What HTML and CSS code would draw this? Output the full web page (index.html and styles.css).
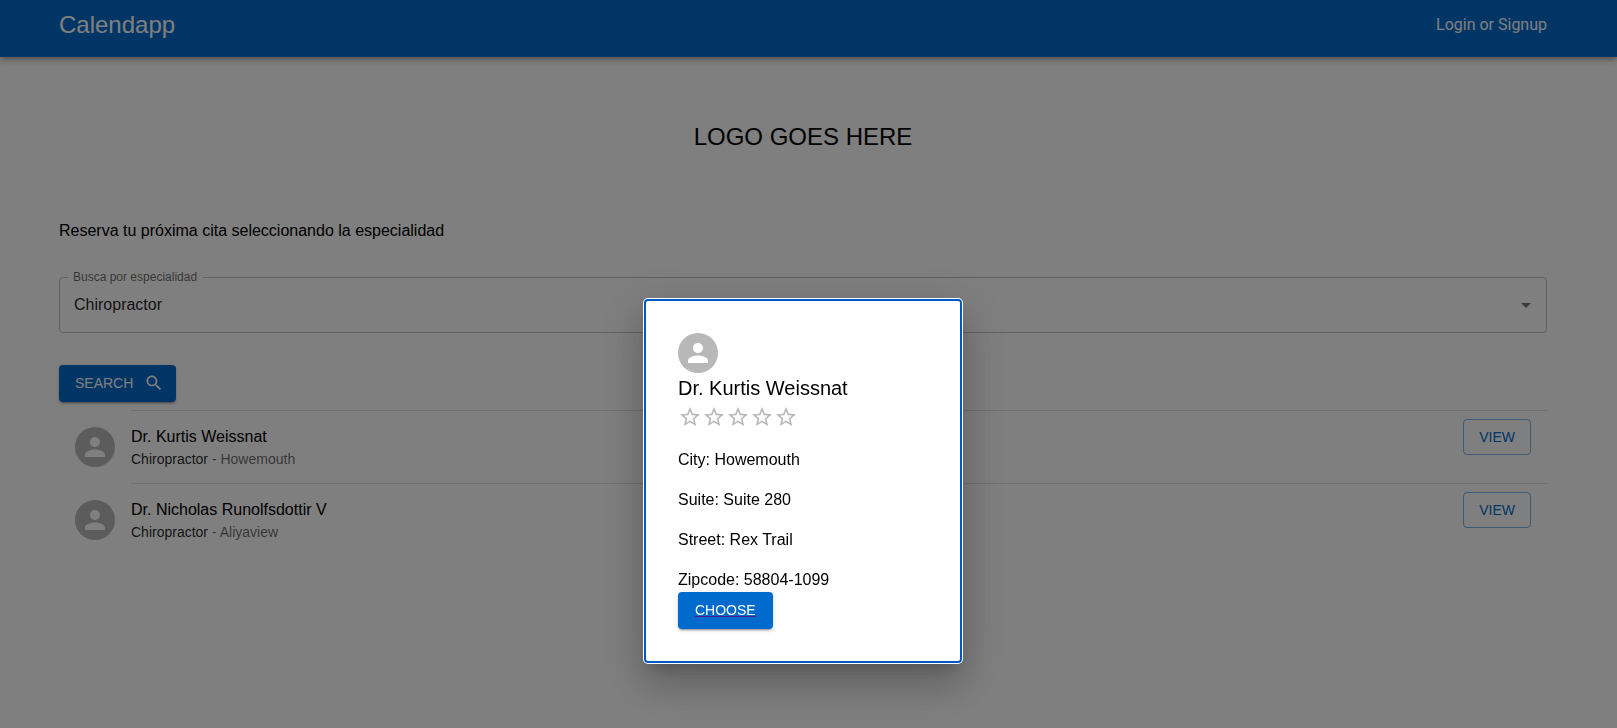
FILE: index.html
```html
<!DOCTYPE html>
<html lang="es">
<head>
<meta charset="utf-8">
<meta name="viewport" content="width=device-width, initial-scale=1">
<title>Calendapp</title>
<link rel="stylesheet" href="styles.css">
</head>
<body>
<svg class="sprite" aria-hidden="true">
  <symbol id="person" viewBox="0 0 24 24"><path d="M12 12c2.21 0 4-1.79 4-4s-1.79-4-4-4-4 1.79-4 4 1.79 4 4 4zm0 2c-2.67 0-8 1.34-8 4v2h16v-2c0-2.66-5.33-4-8-4z"/></symbol>
  <symbol id="star" viewBox="0 0 24 24"><path d="M22 9.24l-7.19-.62L12 2 9.19 8.63 2 9.24l5.46 4.73L5.82 21 12 17.27 18.18 21l-1.63-7.03L22 9.24zM12 15.4l-3.76 2.27 1-4.28-3.32-2.88 4.38-.38L12 6.1l1.71 4.04 4.38.38-3.32 2.88 1 4.28L12 15.4z"/></symbol>
</svg>

<header class="appbar">
  <div class="container appbar-inner">
    <a class="brand" href="#">Calendapp</a>
    <a class="login" href="#">Login or Signup</a>
  </div>
</header>

<main class="container">
  <h1 class="logo">LOGO GOES HERE</h1>
  <p class="intro">Reserva tu próxima cita seleccionando la especialidad</p>

  <form class="search-form">
    <fieldset class="field">
      <legend class="field-legend"><label for="specialty">Busca por especialidad</label></legend>
      <div class="field-body">
        <select class="field-select" id="specialty">
          <option>Chiropractor</option>
        </select>
        <svg class="caret" viewBox="0 0 24 24" aria-hidden="true"><path d="M7 10l5 5 5-5z"/></svg>
      </div>
    </fieldset>
    <button class="button button-filled button-search" type="button">SEARCH
      <svg class="search-icon" viewBox="0 0 24 24" aria-hidden="true"><path d="M15.5 14h-.79l-.28-.27C15.41 12.59 16 11.11 16 9.5 16 5.91 13.09 3 9.5 3S3 5.91 3 9.5 5.91 16 9.5 16c1.61 0 3.09-.59 4.23-1.57l.27.28v.79l5 4.99L20.49 19l-4.99-5zm-6 0C7.01 14 5 11.99 5 9.5S7.01 5 9.5 5 14 7.01 14 9.5 11.99 14 9.5 14z"/></svg>
    </button>
  </form>

  <ul class="doctors">
    <li class="doctor">
      <span class="avatar"><svg class="avatar-icon" aria-hidden="true"><use href="#person"/></svg></span>
      <div class="doctor-text">
        <p class="doctor-name">Dr. Kurtis Weissnat</p>
        <p class="doctor-detail"><span class="specialty">Chiropractor</span> - Howemouth</p>
      </div>
      <button class="button button-outlined" type="button">VIEW</button>
    </li>
    <li class="doctor">
      <span class="avatar"><svg class="avatar-icon" aria-hidden="true"><use href="#person"/></svg></span>
      <div class="doctor-text">
        <p class="doctor-name">Dr. Nicholas Runolfsdottir V</p>
        <p class="doctor-detail"><span class="specialty">Chiropractor</span> - Aliyaview</p>
      </div>
      <button class="button button-outlined" type="button">VIEW</button>
    </li>
  </ul>
</main>

<div class="backdrop">
  <section class="dialog" role="dialog" aria-modal="true" aria-labelledby="dialog-title">
    <span class="avatar"><svg class="avatar-icon" aria-hidden="true"><use href="#person"/></svg></span>
    <h2 class="dialog-title" id="dialog-title">Dr. Kurtis Weissnat</h2>
    <div class="rating" role="img" aria-label="0 Stars">
      <svg class="star"><use href="#star"/></svg>
      <svg class="star"><use href="#star"/></svg>
      <svg class="star"><use href="#star"/></svg>
      <svg class="star"><use href="#star"/></svg>
      <svg class="star"><use href="#star"/></svg>
    </div>
    <div class="address">
      <p>City: Howemouth</p>
      <p>Suite: Suite 280</p>
      <p>Street: Rex Trail</p>
      <p>Zipcode: 58804-1099</p>
    </div>
    <a class="button button-filled button-choose" href="#">CHOOSE</a>
  </section>
</div>
</body>
</html>
```
FILE: styles.css
```css
:root {
  --primary: #006bcc;
  --gutter: 11px;
}

* {
  box-sizing: border-box;
}

body {
  margin: 0;
  background: #fff;
  color: #000;
  font: 16px/24px "Liberation Sans", Arial, sans-serif;
}

h1, h2, p, ul {
  margin: 0;
  padding: 0;
  font-weight: 400;
}

svg {
  fill: currentColor;
  flex: none;
}

.sprite {
  display: none;
}

.appbar,
.backdrop {
  padding-right: var(--gutter);
}

.container {
  max-width: 1536px;
  margin: 0 auto;
  padding: 0 24px;
}

main.container {
  max-width: 1547px;
  padding-right: 35px;
}

@media (min-width: 1547px) {
  body > main.container {
    max-width: none;
    margin: 0;
    padding: 0 calc((100% - 1499px) / 2 + 11px) 0 calc((100% - 1499px) / 2);
  }
}

.appbar {
  background: var(--primary);
  box-shadow: 0 2px 4px -1px rgba(0, 0, 0, .2), 0 4px 5px rgba(0, 0, 0, .14), 0 1px 10px rgba(0, 0, 0, .12);
}

.appbar-inner {
  display: flex;
  align-items: center;
  justify-content: space-between;
  padding-top: 9px;
  padding-bottom: 16px;
}

.brand,
.login {
  color: #fff;
  text-decoration: none;
}

.brand {
  font-size: 24px;
  line-height: 32px;
}

.login {
  font-family: Roboto, sans-serif;
}

.logo {
  padding: 64px 0;
  font-size: 24px;
  line-height: 32px;
  text-align: center;
}

.intro {
  padding-top: 2px;
}

.search-form {
  padding-top: 28px;
}

.field {
  margin: 0;
  padding: 0 8px;
  border: 1px solid rgba(0, 0, 0, .23);
  border-radius: 4px;
}

.field-legend {
  padding: 0 6px 0 5px;
  color: rgba(0, 0, 0, .6);
  font-size: 12px;
  line-height: 12px;
}

.field-body {
  display: flex;
  align-items: center;
  position: relative;
  padding-bottom: 6px;
}

.field-select {
  flex: 1;
  height: 43px;
  padding: 0 32px 0 6px;
  border: 0;
  outline: 0;
  appearance: none;
  background: none;
  color: rgba(0, 0, 0, .87);
  font: inherit;
}

.caret {
  position: absolute;
  right: 0;
  width: 24px;
  height: 24px;
  color: rgba(0, 0, 0, .54);
  pointer-events: none;
}

.button {
  display: inline-flex;
  align-items: center;
  justify-content: center;
  border: 0;
  border-radius: 4px;
  font: 14px/24px "Liberation Sans", Arial, sans-serif;
  cursor: pointer;
}

.button-filled {
  height: 37px;
  padding-bottom: 1px;
  background: var(--primary);
  color: #fff;
  box-shadow: 0 3px 1px -2px rgba(0, 0, 0, .2), 0 2px 2px rgba(0, 0, 0, .14), 0 1px 5px rgba(0, 0, 0, .12);
}

.button-search {
  gap: 11px;
  margin-top: 32px;
  padding: 0 12px 1px 16px;
}

.search-icon {
  width: 20px;
  height: 20px;
}

.button-outlined {
  height: 36px;
  padding: 0 15px;
  border: 1px solid rgba(0, 107, 204, .5);
  background: none;
  color: var(--primary);
}

.button-choose {
  padding: 0 17px 2px;
  text-decoration: underline #551a8b;
}

.doctors {
  padding-top: 8px;
  list-style: none;
}

.doctor {
  display: grid;
  grid-template-columns: 72px 1fr;
  position: relative;
}

.doctor .avatar {
  margin: 17px 0 0 16px;
}

.doctor-text {
  min-height: 73px;
  padding: 14px 112px 14px 0;
  border-top: 1px solid rgba(0, 0, 0, .12);
}

.doctor .button {
  position: absolute;
  top: 9px;
  right: 16px;
}

.doctor-detail {
  color: rgba(0, 0, 0, .6);
  font-size: 14px;
  line-height: 20px;
}

.specialty {
  color: rgba(0, 0, 0, .87);
}

.avatar {
  display: flex;
  align-items: center;
  justify-content: center;
  width: 40px;
  height: 40px;
  border-radius: 50%;
  background: #b8b8b8;
  color: #fff;
}

.avatar-icon {
  width: 30px;
  height: 30px;
}

.backdrop {
  display: flex;
  align-items: flex-start;
  justify-content: center;
  position: fixed;
  inset: 0;
  padding-top: 299px;
  background: rgba(0, 0, 0, .5);
}

.dialog {
  width: 318px;
  padding: 32px;
  border: 2px solid #0058c4;
  border-radius: 4px;
  background: #fff;
  box-shadow: 0 0 0 1px #fff, 0 11px 15px -7px rgba(0, 0, 0, .2), 0 24px 38px 3px rgba(0, 0, 0, .14), 0 9px 46px 8px rgba(0, 0, 0, .12);
}

.dialog-title {
  padding-bottom: 2px;
  font-size: 20px;
  line-height: 30px;
}

.rating {
  display: flex;
  color: #b8b8b8;
}

.star {
  width: 24px;
  height: 24px;
}

.address {
  display: grid;
  gap: 16px;
  padding-top: 19px;
}
```
